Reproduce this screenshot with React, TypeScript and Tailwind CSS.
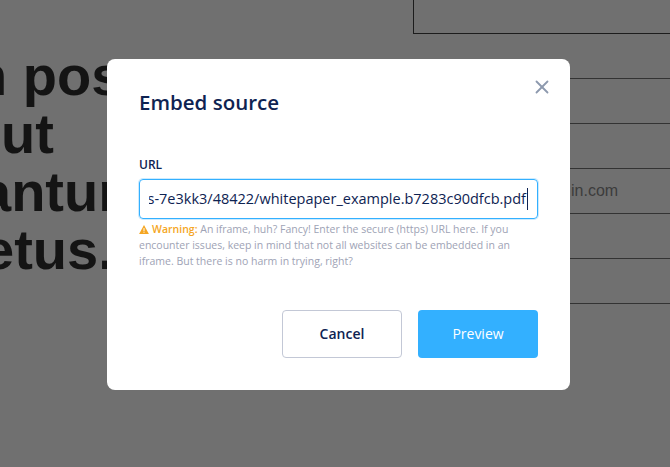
import { X } from "lucide-react";

const font = "font-['Open_Sans','Noto_Sans',sans-serif]";

function Backdrop() {
  return (
    <div className="flex h-[467px] w-[670px] overflow-hidden bg-[#707070]">
      {/* Article text, cut off by the left edge */}
      <div className="w-[413px] shrink-0 overflow-hidden pt-[47px]">
        <div className="w-[450px] font-['Liberation_Sans',sans-serif] text-[56px] leading-[58px] font-bold whitespace-nowrap text-[#141414]">
          <p className="ml-[-27px]">n posuere</p>
          <p className="ml-px">ut</p>
          <p className="ml-[-20px]">antur</p>
          <p className="ml-[-17px]">etus.</p>
        </div>
      </div>

      {/* Contact table */}
      <div className="flex-1 font-['Liberation_Sans',sans-serif] text-base text-[#3c3c3c]">
        <div className="h-[34px] border-b border-l border-[#1c1c1c]" />
        <div className="h-[45px] border-b border-[#333]" />
        <div className="h-[45px] border-b border-[#333]" />
        <div className="h-[45px] border-b border-[#333]" />
        <div className="flex h-[45px] items-center border-b border-[#333] pl-[158px]">in.com</div>
        <div className="h-[45px] border-b border-[#333]" />
        <div className="h-[45px] border-b border-[#333]" />
      </div>
    </div>
  );
}

function Modal() {
  return (
    <div className={`flex h-[331px] w-[463px] flex-col rounded-lg bg-white px-8 pt-[31px] pb-8 ${font}`}>
      <div className="flex items-start justify-between">
        <h2 className="text-[20.5px] leading-6 font-semibold text-[#0e2352]">Embed source</h2>
        <button className="mt-[-14px] mr-[-15px] text-[#8d99ae]">
          <X size={22} strokeWidth={2} />
        </button>
      </div>

      <label className="mt-[43px] text-[12px] leading-4 font-semibold text-[#0e2352]">URL</label>
      <div className="mt-[6px] flex h-10 items-center justify-end overflow-hidden rounded border border-[#33b0ff] px-[9px] shadow-[0_0_0_1px_#33b0ff40]">
        <div className="flex min-w-0 justify-end overflow-hidden">
          <span className="shrink-0 text-[14.5px] font-medium whitespace-nowrap text-[#0e2352]">
            https://s3.amazonaws.com/uploads-7e3kk3/48422/whitepaper_example.b7283c90dfcb.pdf
          </span>
          <span className="ml-px h-[22px] w-px shrink-0 bg-[#0e2352]" />
        </div>
      </div>

      <p className="mt-[2px] text-[10.5px] leading-4 text-[#9ea3b5]">
        <svg viewBox="0 0 12 11" className="mr-[3px] mb-[2px] inline h-[9px] w-[10px]">
          <path d="M6 0 12 11H0Z" fill="#f5a623" />
          <rect x="5.4" y="3.8" width="1.2" height="3.8" fill="#fff" />
          <rect x="5.4" y="8.3" width="1.2" height="1.2" fill="#fff" />
        </svg>
        <span className="font-semibold text-[#f5a623]">Warning:</span> An iframe, huh? Fancy! Enter the secure (https)
        URL here. If you encounter issues, keep in mind that not all websites can be embedded in an iframe. But there is
        no harm in trying, right?
      </p>

      <div className="mt-auto flex justify-end gap-4">
        <button className="h-12 w-[120px] rounded border border-[#c3c8d6] pb-[2px] text-[14px] font-semibold text-[#0e2352]">
          Cancel
        </button>
        <button className="h-12 w-[120px] rounded bg-[#33b0ff] pb-[2px] text-[14px] font-medium text-white">
          Preview
        </button>
      </div>
    </div>
  );
}

export default function App() {
  return (
    <div className="relative h-[467px] w-[670px] overflow-hidden">
      <Backdrop />
      <div className="absolute inset-0 pt-[59px] pl-[107px]">
        <Modal />
      </div>
    </div>
  );
}
